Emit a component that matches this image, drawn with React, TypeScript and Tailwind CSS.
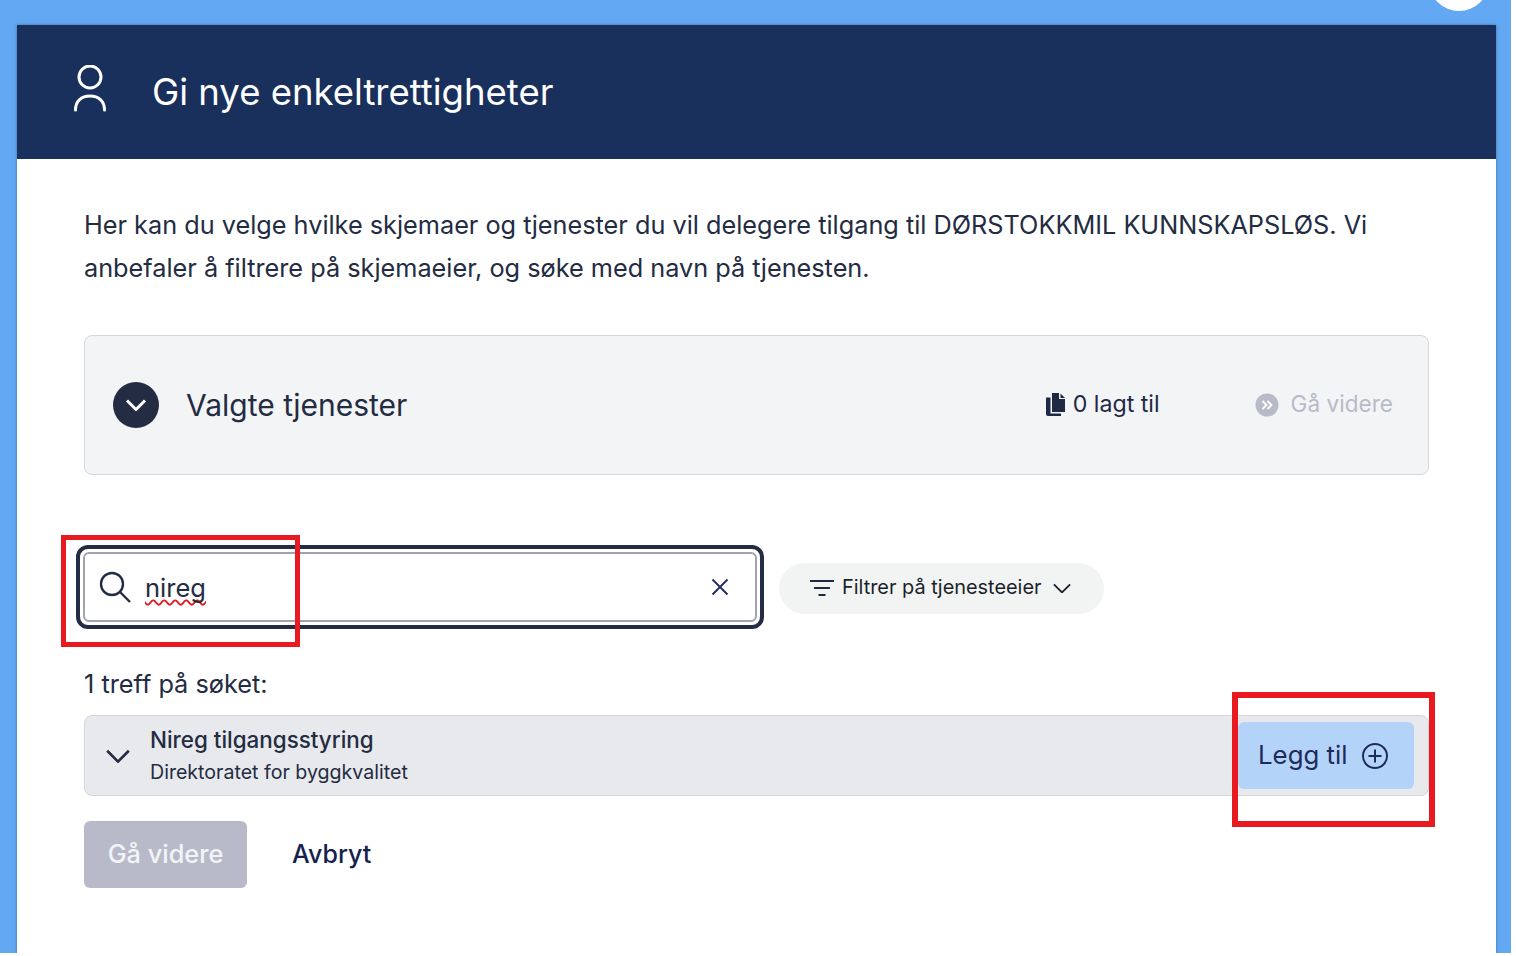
function PersonIcon() {
  return (
    <svg width="34" height="48" viewBox="0 0 34 48" fill="none" stroke="white" strokeWidth="3" strokeLinecap="round" className="-mt-[6px]">
      <circle cx="17" cy="12" r="11" />
      <path d="M2.500 45c0-9 6-14 14.500-14s14.500 5 14.500 14" />
    </svg>
  )
}

function Chevron({ width, stroke, weight }: { width: number; stroke: string; weight: number }) {
  return (
    <svg width={width} height={width * 0.6} viewBox="0 0 20 12" fill="none" stroke={stroke} strokeWidth={weight}>
      <path d="M1 1.500l9 9 9-9" />
    </svg>
  )
}

function FilterIcon() {
  return (
    <svg width="24" height="20" viewBox="0 0 24 20" fill="none" stroke="#1e2a44" strokeWidth="2">
      <path d="M0 3h24M4 10h16M8.500 17h7" />
    </svg>
  )
}

function SearchIcon() {
  return (
    <svg width="32" height="32" viewBox="0 0 32 32" fill="none" stroke="#232c42" strokeWidth="2.400">
      <circle cx="13" cy="13" r="11" />
      <path d="M21 21l10 10" />
    </svg>
  )
}

function CloseIcon() {
  return (
    <svg width="18" height="18" viewBox="0 0 18 18" fill="none" stroke="#1e2a5c" strokeWidth="1.800">
      <path d="M1.500 1.500l15 15M16.500 1.500l-15 15" />
    </svg>
  )
}

function PlusCircleIcon() {
  return (
    <svg width="26" height="26" viewBox="0 0 26 26" fill="none" stroke="#1e2a5c" strokeWidth="2">
      <circle cx="13" cy="13" r="12" />
      <path d="M13 6.500v13M6.500 13h13" />
    </svg>
  )
}

function DocumentsIcon() {
  return (
    <svg width="20" height="23" viewBox="0 0 20 23" fill="#1e2a44">
      <path d="M6 0h7v6h6v13H6z" />
      <path d="M14.500 0.500L19 5h-4.500z" />
      <path d="M0 4.500h4.500V20.500H15V23H2a2 2 0 0 1-2-2z" />
    </svg>
  )
}

function ForwardIcon() {
  return (
    <svg width="24" height="24" viewBox="0 0 24 24" fill="none">
      <circle cx="12" cy="12" r="11.500" fill="#b8bac9" />
      <path d="M7.500 8l4 4-4 4M12.500 8l4 4-4 4" stroke="white" strokeWidth="1.800" />
    </svg>
  )
}

export default function App() {
  return (
    <div className="relative h-[956px] w-[1516px] overflow-hidden bg-white font-['Inter',sans-serif] text-[#1e2a44]">
      <div className="relative h-[953px] w-[1511px] overflow-hidden bg-[#63a8f2] pl-[17px] pt-[25px]">
        <div className="absolute left-[1429px] top-[-49px] h-[60px] w-[60px] rounded-full bg-white" />

        <div className="h-[960px] w-[1479px] bg-white shadow-[0_0_3px_rgba(30,42,68,0.45)]">
          <header className="flex h-[134px] items-center gap-[45px] bg-[#19305c] pl-[56px]">
            <PersonIcon />
            <h1 className="text-[36.500px] font-normal leading-none text-white">Gi nye enkeltrettigheter</h1>
          </header>

          <div className="px-[67px] pt-[45px]">
            <p className="w-[1345px] text-[25.270px] leading-[43px] text-[#232c42]">
              Her kan du velge hvilke skjemaer og tjenester du vil delegere tilgang til DØRSTOKKMIL KUNNSKAPSLØS. Vi anbefaler å filtrere på skjemaeier, og søke med navn på tjenesten.
            </p>

            <section className="mt-[45px] flex h-[140px] w-[1345px] items-center rounded-[8px] border border-[#d4d6dc] bg-[#f3f4f6] pl-[28px] pr-[35px]">
              <span className="flex h-[46px] w-[46px] items-center justify-center rounded-full bg-[#232c42]">
                <Chevron width={20} stroke="white" weight={3} />
              </span>
              <h2 className="ml-[27px] text-[30px] font-normal leading-none text-[#232c42]">Valgte tjenester</h2>
              <div className="mb-[1px] ml-auto flex items-center gap-[7px] text-[23.200px] leading-none">
                <DocumentsIcon />
                <span>0 lagt til</span>
              </div>
              <div className="mb-[1px] ml-[95px] flex items-center gap-[12px] text-[22.600px] leading-none text-[#b8bac9]">
                <ForwardIcon />
                <span>Gå videre</span>
              </div>
            </section>

            <div className="mt-[70px] flex items-center">
              <div className="ml-[-8px] flex h-[84px] w-[688px] rounded-[12px] border-[4px] border-[#232c42] bg-white p-[3px]">
                <div className="flex flex-1 items-center rounded-[6px] border-2 border-[#a0a3ad] pl-[14px] pr-[26px]">
                  <SearchIcon />
                  <span className="ml-[14px] mt-[2px] text-[25.500px] leading-none text-[#232c42] underline decoration-[#e01b24] decoration-wavy decoration-[1.500px] underline-offset-[2px] [text-decoration-skip-ink:none]">nireg</span>
                  <span className="ml-auto">
                    <CloseIcon />
                  </span>
                </div>
              </div>
              <button className="ml-[15px] mt-[2px] flex h-[51px] w-[325px] items-center justify-start rounded-full bg-[#f2f4f3] pl-[31px] text-[19.900px] text-[#1a1f2c]">
                <FilterIcon />
                <span className="ml-[8px] mr-[11px]">Filtrer på tjenesteeier</span>
                <Chevron width={18} stroke="#1a1f2c" weight={2} />
              </button>
            </div>

            <p className="mt-[42px] text-[25.300px] leading-none text-[#232c42]">1 treff på søket:</p>

            <div className="mt-[19px] flex h-[81px] w-[1345px] items-center rounded-[8px] border border-[#d4d6dc] bg-[#e8e9ec] pl-[21px] pr-[14px]">
              <Chevron width={24} stroke="#232c42" weight={2.200} />
              <div className="ml-[20px] flex flex-col gap-[11px]">
                <span className="text-[22.400px] font-medium leading-none text-[#232c42]">Nireg tilgangsstyring</span>
                <span className="text-[19.600px] leading-none text-[#232c42]">Direktoratet for byggkvalitet</span>
              </div>
              <button className="ml-auto flex h-[67px] w-[176px] items-center justify-start gap-[15px] rounded-[6px] bg-[#b3d4f8] pl-[20px] text-[25.800px] text-[#1e2a5c]">
                Legg til
                <PlusCircleIcon />
              </button>
            </div>

            <div className="mt-[25px] flex items-center">
              <button className="h-[67px] w-[163px] rounded-[6px] bg-[#b8bac9] pb-[2px] text-[25.300px] font-medium text-[#f3f4f7]">Gå videre</button>
              <button className="ml-[45px] text-[25px] font-medium text-[#14224e]">Avbryt</button>
            </div>
          </div>
        </div>
      </div>

      {/* Red annotation boxes drawn over the screenshot */}
      <div className="absolute left-[61px] top-[535px] h-[112px] w-[239px] border-[5px] border-[#e8191f]" />
      <div className="absolute left-[1232px] top-[692px] h-[135px] w-[203px] border-[6px] border-[#e8191f]" />
    </div>
  )
}
